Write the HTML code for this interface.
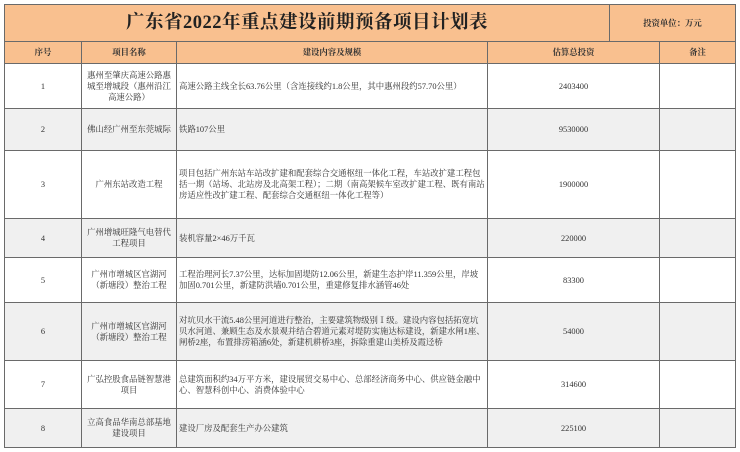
<!DOCTYPE html>
<html><head><meta charset="utf-8"><style>
body{margin:0;background:#fff;width:740px;height:452px;overflow:hidden}
table{position:absolute;left:4px;top:4px;border-collapse:collapse;table-layout:fixed;font-family:"Liberation Serif","Noto Serif CJK SC",serif;font-size:8.4px;color:#333}
td{border:1px solid #6a6a6a;padding:0 2px;text-align:center;vertical-align:middle;line-height:11px;overflow:hidden}
td.l{text-align:left;padding-left:2px}
tr.g td{background:#f0f0f0}
tr.h td{background:#f9c08f;font-weight:bold;font-size:8.4px;color:#333}
tr.h td.t{font-size:18.5px;font-weight:bold;color:#222;letter-spacing:0.5px;line-height:24px}
</style></head><body>
<table>
<colgroup><col style="width:77px"><col style="width:95px"><col style="width:311px"><col style="width:122px"><col style="width:50px"><col style="width:76px"></colgroup>
<tr class="h" style="height:37px"><td colspan="4" class="t">广东省2022年重点建设前期预备项目计划表</td><td colspan="2">投资单位：万元</td></tr>
<tr class="h" style="height:22px"><td>序号</td><td>项目名称</td><td>建设内容及规模</td><td colspan="2">估算总投资</td><td>备注</td></tr>
<tr style="height:45px"><td>1</td><td>惠州至肇庆高速公路惠城至增城段（惠州沿江高速公路）</td><td class="l">高速公路主线全长63.76公里（含连接线约1.8公里，其中惠州段约57.70公里）</td><td colspan="2">2403400</td><td></td></tr>
<tr class="g" style="height:42px"><td>2</td><td>佛山经广州至东莞城际</td><td class="l">铁路107公里</td><td colspan="2">9530000</td><td></td></tr>
<tr style="height:68px"><td>3</td><td>广州东站改造工程</td><td class="l">项目包括广州东站车站改扩建和配套综合交通枢纽一体化工程，车站改扩建工程包括一期（站场、北站房及北高架工程）；二期（南高架候车室改扩建工程、既有南站房适应性改扩建工程、配套综合交通枢纽一体化工程等）</td><td colspan="2">1900000</td><td></td></tr>
<tr class="g" style="height:39px"><td>4</td><td>广州增城旺隆气电替代工程项目</td><td class="l">装机容量2×46万千瓦</td><td colspan="2">220000</td><td></td></tr>
<tr style="height:45px"><td>5</td><td>广州市增城区官湖河（新塘段）整治工程</td><td class="l">工程治理河长7.37公里，达标加固堤防12.06公里，新建生态护岸11.359公里，岸坡加固0.701公里，新建防洪墙0.701公里，重建修复排水涵管46处</td><td colspan="2">83300</td><td></td></tr>
<tr class="g" style="height:58px"><td>6</td><td>广州市增城区官湖河（新塘段）整治工程</td><td class="l">对坑贝水干流5.48公里河道进行整治，主要建筑物级别Ⅰ级。建设内容包括拓宽坑贝水河道、兼顾生态及水景观并结合碧道元素对堤防实施达标建设，新建水闸1座、闸桥2座，布置排涝箱涵6处，新建机耕桥3座，拆除重建山美桥及霞迳桥</td><td colspan="2">54000</td><td></td></tr>
<tr style="height:48px"><td>7</td><td>广弘控股食品链智慧港项目</td><td class="l">总建筑面积约34万平方米，建设展贸交易中心、总部经济商务中心、供应链金融中心、智慧科创中心、消费体验中心</td><td colspan="2">314600</td><td></td></tr>
<tr class="g" style="height:39px"><td>8</td><td>立高食品华南总部基地建设项目</td><td class="l">建设厂房及配套生产办公建筑</td><td colspan="2">225100</td><td></td></tr>
</table>
</body></html>
